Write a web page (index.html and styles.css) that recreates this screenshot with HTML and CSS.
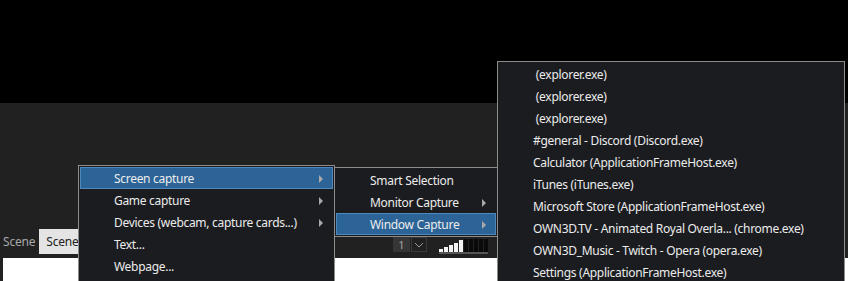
FILE: index.html
```html
<!DOCTYPE html>
<html>

<head>
    <meta name="viewport" content="width=device-width, initial-scale=1">
    <link rel="stylesheet" href="styles.css">
</head>

<body>
    <!-- Vista previa (negra) -->
    <div class="preview"></div>

    <!-- Panel inferior -->
    <div class="dock">
        <div class="controls">
            <div class="spin">1</div>
            <div class="drop">
                <svg width="10" height="6" viewBox="0 0 10 6"><path d="M1 1 L5 5 L9 1" fill="none" stroke="#9a9a9a" stroke-width="1"/></svg>
            </div>
            <div class="meter">
                <span class="bar on" style="height:3px"></span>
                <span class="bar on" style="height:5px"></span>
                <span class="bar on" style="height:7px"></span>
                <span class="bar on" style="height:9px"></span>
                <span class="bar on" style="height:12px"></span>
                <span class="bar" style="height:13px"></span>
                <span class="bar" style="height:13px"></span>
                <span class="bar" style="height:13px"></span>
                <span class="bar" style="height:13px"></span>
                <span class="bar" style="height:13px"></span>
            </div>
        </div>
        <div class="tabs">
            <span class="tab-label">Scene</span>
            <span class="tab active">Scene</span>
        </div>
        <div class="scene-list"></div>
    </div>

    <!-- Menú principal -->
    <div class="menu menu-main">
        <div class="item hl">Screen capture<span class="arrow"></span></div>
        <div class="item">Game capture<span class="arrow"></span></div>
        <div class="item">Devices (webcam, capture cards...)<span class="arrow"></span></div>
        <div class="item">Text...</div>
        <div class="item">Webpage...</div>
    </div>

    <!-- Submenú de captura -->
    <div class="menu menu-capture">
        <div class="item">Smart Selection</div>
        <div class="item">Monitor Capture<span class="arrow"></span></div>
        <div class="item hl">Window Capture<span class="arrow"></span></div>
    </div>

    <!-- Lista de ventanas -->
    <div class="menu menu-windows">
        <div class="item">&nbsp;(explorer.exe)</div>
        <div class="item">&nbsp;(explorer.exe)</div>
        <div class="item">&nbsp;(explorer.exe)</div>
        <div class="item">#general - Discord (Discord.exe)</div>
        <div class="item">Calculator (ApplicationFrameHost.exe)</div>
        <div class="item">iTunes (iTunes.exe)</div>
        <div class="item">Microsoft Store (ApplicationFrameHost.exe)</div>
        <div class="item">OWN3D.TV - Animated Royal Overla... (chrome.exe)</div>
        <div class="item">OWN3D_Music - Twitch - Opera (opera.exe)</div>
        <div class="item">Settings (ApplicationFrameHost.exe)</div>
    </div>
</body>

</html>
```

FILE: styles.css
```css
/* Estilos de la interfaz */
body {
    margin: 0;
    width: 848px;
    height: 281px;
    overflow: hidden;
    background-color: #000;
    font-family: "Noto Sans", sans-serif;
    font-size: 12px;
    position: relative;
}

.preview {
    height: 103px;
    background-color: #000;
}

.dock {
    height: 178px;
    background-color: #212121;
    display: flex;
    flex-direction: column;
}

.controls {
    display: flex;
    align-items: flex-start;
    margin-top: 134px;
    padding-left: 393px;
    height: 0;
}

.spin {
    width: 17px;
    height: 15px;
    background-color: #363636;
    color: #a0a0a0;
    font-size: 11px;
    line-height: 15px;
    text-align: center;
}

.drop {
    width: 16px;
    height: 15px;
    margin-left: 1px;
    border: 1px solid #3a3a3a;
    box-sizing: border-box;
    display: flex;
    align-items: center;
    justify-content: center;
}

.meter {
    display: flex;
    align-items: flex-end;
    gap: 1px;
    margin-left: 12px;
    height: 15px;
    border-bottom: 2px solid #555;
}

.bar {
    width: 4px;
    background-color: #0a0a0a;
}

.bar.on {
    background-color: #f2f2f2;
}

.tabs {
    display: flex;
    align-items: stretch;
    margin-top: -8px;
    height: 25px;
    letter-spacing: -0.2px;
}

.tab-label {
    padding: 0 4px 0 3px;
    color: #a8a8a8;
    line-height: 25px;
}

.tab {
    padding: 0 8px 0 7px;
    color: #222;
    line-height: 25px;
}

.tab.active {
    background-color: #e4e4e4;
}

.scene-list {
    margin: 4px 0 0 3px;
    flex: 1;
    background-color: #fff;
}

/* Menús */
.menu {
    position: absolute;
    box-sizing: border-box;
    background-color: #1b1c20;
    border: 1px solid #8c8c8c;
    padding: 1px;
    color: #ececec;
    letter-spacing: -0.3px;
}

.item {
    height: 22px;
    line-height: 21px;
    padding-left: 33px;
    position: relative;
    white-space: nowrap;
    border: 1px solid transparent;
    box-sizing: border-box;
}

.item.hl {
    background-color: #2c6497;
    border-color: #4d88bf;
}

.arrow {
    position: absolute;
    right: 9px;
    top: 7px;
    width: 0;
    height: 0;
    border-top: 4px solid transparent;
    border-bottom: 4px solid transparent;
    border-left: 4px solid #a9a9a9;
}

.menu-main {
    left: 78px;
    top: 165px;
    width: 257px;
    padding-bottom: 20px;
}

.menu-capture {
    left: 334px;
    top: 167px;
    width: 164px;
}

.menu-windows {
    left: 497px;
    top: 61px;
    width: 348px;
    padding-bottom: 20px;
}
```
